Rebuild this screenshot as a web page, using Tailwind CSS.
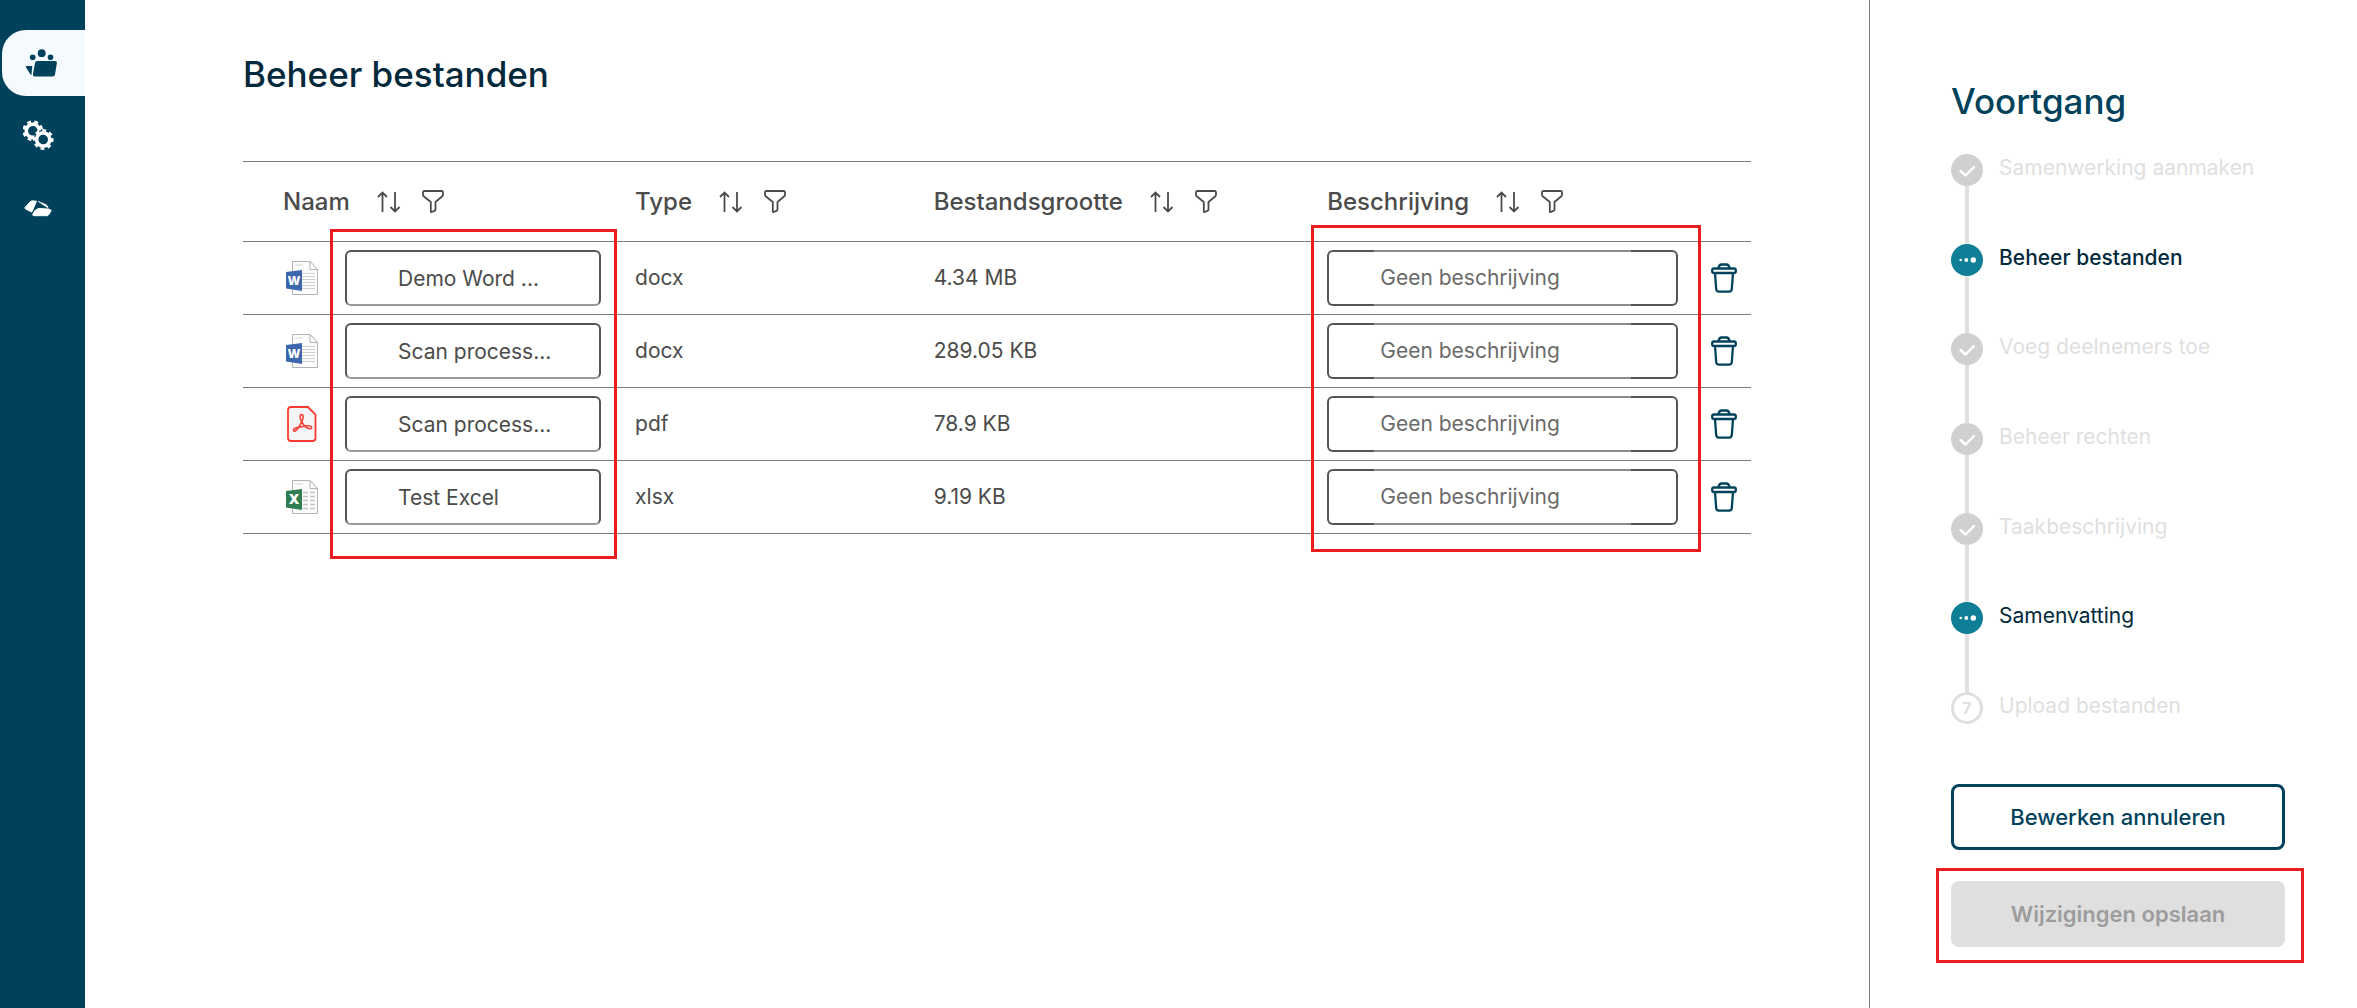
<!DOCTYPE html>
<html lang="nl">
<head>
<meta charset="utf-8">
<meta name="viewport" content="width=device-width, initial-scale=1">
<title>Beheer bestanden</title>
<script src="https://cdn.jsdelivr.net/npm/@tailwindcss/browser@4"></script>
</head>
<body class="flex min-h-screen bg-white font-['Inter',sans-serif] text-[21px] leading-7 text-[#4b4b4b]">

<!-- Shared icons -->
<svg class="hidden" aria-hidden="true">
  <symbol id="sort" viewBox="0 0 24 22"><path d="M5.500 21V1.500M1 6l4.500-4.500L10 6M18 1v19.500M13.500 16l4.500 4.500L22.500 16" fill="none" stroke="currentColor" stroke-width="1.800"/></symbol>
  <symbol id="filter" viewBox="0 0 22 23"><path d="M2.500 1h17Q21 1 21 2.500v2.300Q21 5.600 20.300 6.200L13.500 12v7.500q0 .8-.7 1.200l-3 1.300q-1 .4-1-.7V12L1.700 6.200Q1 5.600 1 4.800V2.500Q1 1 2.500 1z" fill="none" stroke="currentColor" stroke-width="1.800" stroke-linejoin="round"/></symbol>
  <symbol id="trash" viewBox="0 0 26 30"><g fill="none" stroke="currentColor" stroke-width="2.300" stroke-linejoin="round"><rect x="1.200" y="5.500" width="23.600" height="4.500" rx="1.800"/><path d="M7.500 5.500Q8 1.500 10.500 1.500h5Q18 1.500 18.500 5.500M4 10l1.200 16q.2 2.600 2.800 2.600h10q2.600 0 2.800-2.600L22 10"/></g></symbol>
  <symbol id="page" viewBox="0 0 32 34"><path d="M6.500.5h17.500l7.500 8v25h-25z" fill="#fcfcfc" stroke="#b3b3b3"/><path d="M24 .5v8h7.500z" fill="#fff" stroke="#b3b3b3" stroke-linejoin="round"/><path d="M9.500 4h7" stroke="#d5d5d5"/></symbol>
  <symbol id="word" viewBox="0 0 32 34"><use href="#page"/><path d="M16 12.500h13M16 15.500h13M16 18.500h13M16 21.500h13M16 24.500h13M16 27.500h13" stroke="#cfcfcf"/><path d="M0 11l16-2v21L0 27.500z" fill="#3c67ac"/><text x="8" y="23.500" text-anchor="middle" font-family="Open Sans, sans-serif" font-size="12" font-weight="800" fill="#fff">W</text></symbol>
  <symbol id="excel" viewBox="0 0 32 34"><use href="#page"/><path d="M17 12.500h5M24 12.500h5M17 16.500h5M24 16.500h5M17 20.500h5M24 20.500h5M17 24.500h5M24 24.500h5M17 28.500h5M24 28.500h5" stroke="#c4c4c4" stroke-width="1.500"/><path d="M0 11l16-2v21L0 27.500z" fill="#2f7d50"/><text x="8" y="24" text-anchor="middle" font-family="Open Sans, sans-serif" font-size="14" font-weight="800" fill="#fff">X</text></symbol>
  <symbol id="pdf" viewBox="0 0 32 36"><path d="M5 1h17l7.500 7.500V32q0 3-3 3H5q-3 0-3-3V4q0-3 3-3z" fill="#f5f5f6" stroke="#fb3b30" stroke-width="1.800"/><path d="M15.800 8.500c-2.300.1-2.200 3.400-.2 7.400-1.400 3.300-2.300 4.600-3.300 5.500-3.300.6-5.500 2-4.900 3.300.8 1.500 3.300-.2 5.100-3.100 2.200-.8 4.500-1.200 6.300-1.300 2.400 2.400 6.300 3.300 6.800 1.400.4-1.900-2.800-2.200-6.600-1.800-1.400-1-2.500-2.300-3.200-4 1.700-4.100 1.900-7.400 0-7.400z" fill="none" stroke="#f4453b" stroke-width="1.600" stroke-linejoin="round"/></symbol>
  <symbol id="check" viewBox="0 0 32 32"><circle cx="16" cy="16" r="16" fill="#cfd0d2"/><path d="M9.500 17l5 4.500 8.500-8.500" fill="none" stroke="#fff" stroke-width="2.400" stroke-linecap="round" stroke-linejoin="round"/></symbol>
  <symbol id="busy" viewBox="0 0 32 32"><circle cx="16" cy="16" r="16" fill="#0f7f98"/><g fill="#fff"><circle cx="9.700" cy="16" r="1.300"/><circle cx="15.300" cy="16" r="1.900"/><circle cx="22.300" cy="16" r="2.700"/></g></symbol>
</svg>

<nav aria-label="Hoofdmenu" class="flex w-[85px] shrink-0 flex-col gap-1.5 bg-[#00425b] pt-[30px] pl-0.5 text-white">
  <a href="#" aria-label="Samenwerkingen" class="flex h-[66px] items-center rounded-l-3xl bg-[#f5faff] pl-[21px] text-[#00425b]">
    <svg class="size-9" viewBox="0 0 36 36" fill="currentColor"><circle cx="9.700" cy="12.200" r="2.800"/><circle cx="18.700" cy="8.200" r="3.900"/><circle cx="27.500" cy="12.200" r="2.800"/><path d="M14.500 16h17.500q2.200 0 1.900 2l-1.900 11.500q-.4 2-2.500 2H11.800q-2.200 0-1.900-2L12 18q.4-2 2.500-2zM3.700 21H9.300L8.500 29.500q-.2.700-.8.200L2.900 22.300q-.5-1.300.8-1.300z"/></svg>
  </a>
  <a href="#" aria-label="Instellingen" class="flex h-[66px] items-center pl-[21px]">
    <svg class="size-9" viewBox="0 0 36 36" fill="none" stroke="#fff"><g transform="rotate(8 9.800 13.800)"><circle cx="9.800" cy="13.800" r="6.600" stroke-width="3.600"/><circle cx="9.800" cy="13.800" r="9.100" stroke-width="2.600" stroke-dasharray="3.800 3.350"/></g><circle cx="20.200" cy="22.500" r="9" fill="#00425b" stroke="#00425b"/><g transform="rotate(-8 20.200 22.500)"><circle cx="20.200" cy="22.500" r="6.600" stroke-width="3.600"/><circle cx="20.200" cy="22.500" r="9.100" stroke-width="2.600" stroke-dasharray="3.800 3.350"/></g></svg>
  </a>
  <a href="#" aria-label="Kennisbank" class="flex h-[66px] items-center pl-[21px]">
    <svg class="size-9" viewBox="0 0 36 36" fill="currentColor" stroke="currentColor" stroke-linejoin="round"><path d="M2 18.500l5.500-6q1-.8 2.500-.6l3.500.3-4.500 10.300q-.5.700-1.300.2L2.200 19.700q-.6-.6-.2-1.200z"/><path d="M15 12.200l8 3.300q2 1.200 2 3.500-4.500-2.800-10-6.800z" stroke-width=".5"/><path d="M9.800 25.200q1-4.200 5.700-5.700l9.500.5q2.800.2 3.200 1.700l-2.700 4.300q-.7.700-1.700.7H11q-1.500 0-1.200-1.500z"/></svg>
  </a>
</nav>

<main class="min-w-0 flex-1 pt-[54px] pr-[118px] pl-[158px]">
  <h1 class="text-[35px] leading-10 font-medium text-[#01293c]">Beheer bestanden</h1>

  <div class="relative mt-[67px]">
    <table class="w-full table-fixed border-collapse text-left">
      <thead>
        <tr class="h-20 border-y border-[#7b7b7b] text-2xl">
          <th scope="col" class="w-[26%] pl-10 font-medium"><div class="flex items-center">Naam
            <button aria-label="Sorteer op naam" class="ml-[27px]"><svg class="h-[22px] w-6"><use href="#sort"/></svg></button>
            <button aria-label="Filter op naam" class="ml-[21px]"><svg class="h-[23px] w-[22px]"><use href="#filter"/></svg></button></div></th>
          <th scope="col" class="w-[19.8%] font-medium"><div class="flex items-center">Type
            <button aria-label="Sorteer op type" class="ml-[27px]"><svg class="h-[22px] w-6"><use href="#sort"/></svg></button>
            <button aria-label="Filter op type" class="ml-[21px]"><svg class="h-[23px] w-[22px]"><use href="#filter"/></svg></button></div></th>
          <th scope="col" class="w-[26.1%] font-medium"><div class="flex items-center">Bestandsgrootte
            <button aria-label="Sorteer op bestandsgrootte" class="ml-[27px]"><svg class="h-[22px] w-6"><use href="#sort"/></svg></button>
            <button aria-label="Filter op bestandsgrootte" class="ml-[21px]"><svg class="h-[23px] w-[22px]"><use href="#filter"/></svg></button></div></th>
          <th scope="col" class="font-medium"><div class="flex items-center">Beschrijving
            <button aria-label="Sorteer op beschrijving" class="ml-[27px]"><svg class="h-[22px] w-6"><use href="#sort"/></svg></button>
            <button aria-label="Filter op beschrijving" class="ml-[21px]"><svg class="h-[23px] w-[22px]"><use href="#filter"/></svg></button></div></th>
          <th scope="col" class="w-10"></th>
        </tr>
      </thead>
      <tbody id="files"></tbody>
    </table>

    <!-- Highlights round the editable columns -->
    <div class="pointer-events-none absolute top-[68px] left-[87px] h-[330px] w-[287px] border-3 border-[#eb1c1f]"></div>
    <div class="pointer-events-none absolute top-16 right-[50px] h-[327px] w-[390px] border-3 border-[#eb1c1f]"></div>
  </div>
</main>

<aside class="w-[488px] shrink-0 border-l border-[#7b7b7b] pt-[81px] pr-[72px] pb-[60px] pl-[81px]">
  <h2 class="text-[35px] leading-10 font-medium text-[#00425b]">Voortgang</h2>

  <ol class="mt-[33px] flex h-[570px] flex-col text-[#dfdfdf]">
    <li class="flex flex-1 gap-4"><div class="flex w-8 flex-col items-center"><svg class="size-8 shrink-0"><use href="#check"/></svg><div class="w-1 flex-1 bg-[#dfdfdf]"></div></div>Samenwerking aanmaken</li>
    <li aria-current="step" class="flex flex-1 gap-4 font-medium text-[#01293c]"><div class="flex w-8 flex-col items-center"><svg class="size-8 shrink-0"><use href="#busy"/></svg><div class="w-1 flex-1 bg-[#dfdfdf]"></div></div>Beheer bestanden</li>
    <li class="flex flex-1 gap-4"><div class="flex w-8 flex-col items-center"><svg class="size-8 shrink-0"><use href="#check"/></svg><div class="w-1 flex-1 bg-[#dfdfdf]"></div></div>Voeg deelnemers toe</li>
    <li class="flex flex-1 gap-4"><div class="flex w-8 flex-col items-center"><svg class="size-8 shrink-0"><use href="#check"/></svg><div class="w-1 flex-1 bg-[#dfdfdf]"></div></div>Beheer rechten</li>
    <li class="flex flex-1 gap-4"><div class="flex w-8 flex-col items-center"><svg class="size-8 shrink-0"><use href="#check"/></svg><div class="w-1 flex-1 bg-[#dfdfdf]"></div></div>Taakbeschrijving</li>
    <li class="flex flex-1 gap-4 text-[#01293c]"><div class="flex w-8 flex-col items-center"><svg class="size-8 shrink-0"><use href="#busy"/></svg><div class="w-1 flex-1 bg-[#dfdfdf]"></div></div>Samenvatting</li>
    <li class="flex gap-4"><div class="flex size-8 items-center justify-center rounded-full border-3 border-[#dfdfdf] text-base font-bold">7</div>Upload bestanden</li>
  </ol>

  <button class="mt-[60px] h-[66px] w-full rounded-lg border-3 border-[#00425b] text-[22px] font-medium text-[#00425b]">Bewerken annuleren</button>
  <div class="relative mt-[31px]">
    <button disabled class="h-[66px] w-full rounded-lg bg-[#dfdfdf] text-[22px] font-semibold text-[#9d9d9d]">Wijzigingen opslaan</button>
    <div class="pointer-events-none absolute -top-[13px] -right-[19px] -bottom-4 -left-[15px] border-3 border-[#eb1c1f]"></div>
  </div>
</aside>

<script>
const files = [
  ["word", "Demo Word ...", "docx", "4.34 MB"],
  ["word", "Scan process...", "docx", "289.05 KB"],
  ["pdf", "Scan process...", "pdf", "78.9 KB"],
  ["excel", "Test Excel", "xlsx", "9.19 KB"],
];
document.getElementById("files").innerHTML = files.map(([icon, name, type, size]) => `
  <tr class="h-[73px] border-b border-[#7b7b7b]">
    <td class="pl-[43px]"><div class="flex items-center gap-[27px]">
      <svg class="h-9 w-8 shrink-0"><use href="#${icon}"/></svg>
      <input aria-label="Naam" value="${name}" class="h-14 w-64 rounded-md border-2 border-[#555] border-b-[#999] pl-[51px] outline-none">
    </div></td>
    <td>${type}</td>
    <td>${size}</td>
    <td class="pr-[33px]"><div class="flex h-14">
      <div class="w-[47px] rounded-l-md border-2 border-r-0 border-[#555]"></div>
      <input aria-label="Beschrijving" placeholder="Geen beschrijving" class="min-w-0 flex-1 border-y-2 border-[#8c8c8c] pl-1.5 outline-none placeholder:text-[#6a6a6a]">
      <div class="w-[47px] rounded-r-md border-2 border-l-0 border-[#555]"></div>
    </div></td>
    <td><button aria-label="Verwijder bestand" class="block text-[#00425b]"><svg class="h-[30px] w-[26px]"><use href="#trash"/></svg></button></td>
  </tr>`).join("");
</script>
</body>
</html>
